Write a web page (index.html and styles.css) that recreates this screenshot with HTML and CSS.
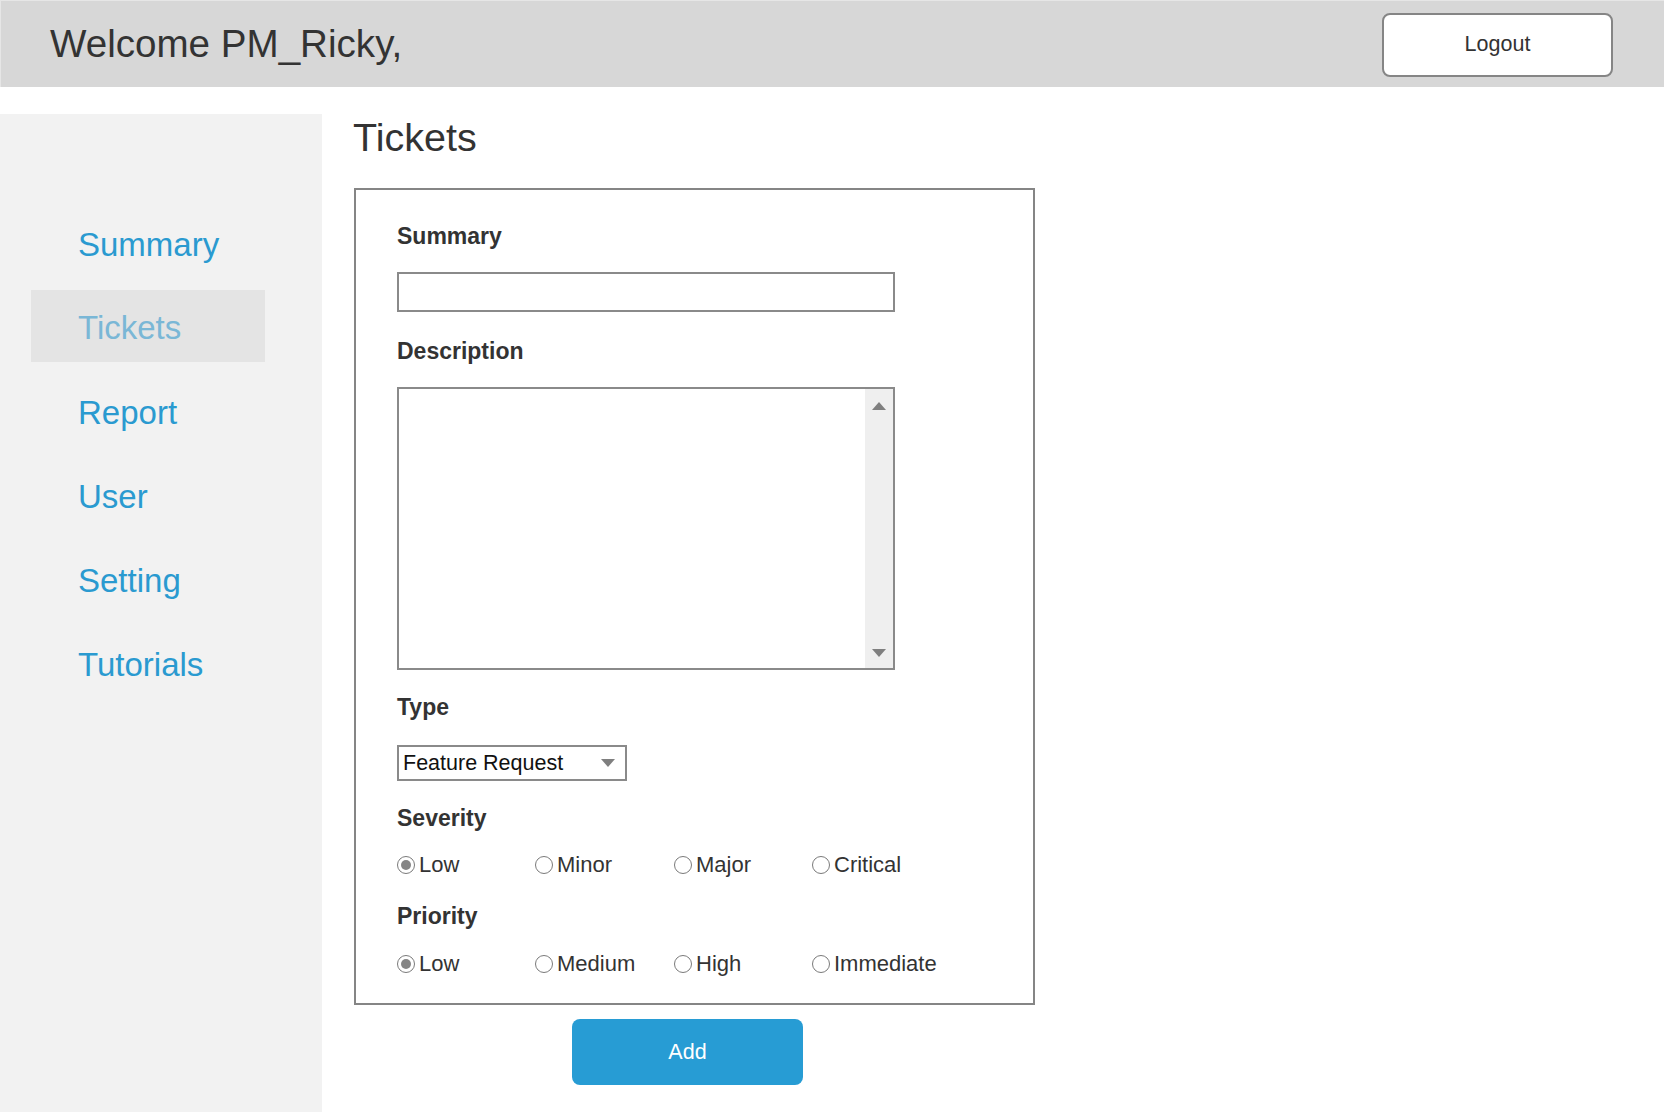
FILE: index.html
```html
<!DOCTYPE html>
<html lang="en">
<head>
<meta charset="utf-8">
<title>Tickets</title>
<link rel="stylesheet" href="styles.css">
</head>
<body>
<header class="topbar">
  <div class="welcome">Welcome PM_Ricky,</div>
  <button class="logout" type="button">Logout</button>
</header>
<div class="layout">
  <nav class="sidebar">
    <a class="nav-item" href="#">Summary</a>
    <a class="nav-item active" href="#">Tickets</a>
    <a class="nav-item" href="#">Report</a>
    <a class="nav-item" href="#">User</a>
    <a class="nav-item" href="#">Setting</a>
    <a class="nav-item" href="#">Tutorials</a>
  </nav>
  <main class="content">
    <h1 class="page-title">Tickets</h1>
    <form class="ticket-form">
      <div class="label">Summary</div>
      <div class="text-input"></div>

      <div class="label gap">Description</div>
      <div class="textarea">
        <div class="scrollbar">
          <svg class="arrow" width="14" height="8" viewBox="0 0 14 8"><polygon points="0,8 14,8 7,0" fill="#7f7f7f"/></svg>
          <svg class="arrow" width="14" height="8" viewBox="0 0 14 8"><polygon points="0,0 14,0 7,8" fill="#7f7f7f"/></svg>
        </div>
      </div>

      <div class="label gap type-label">Type</div>
      <div class="select">
        <span>Feature Request</span>
        <svg width="14" height="8" viewBox="0 0 14 8"><polygon points="0,0 14,0 7,8" fill="#7f7f7f"/></svg>
      </div>

      <div class="label gap severity-label">Severity</div>
      <div class="radio-row">
        <span class="radio checked"><span class="dot"></span>Low</span>
        <span class="radio"><span class="dot"></span>Minor</span>
        <span class="radio"><span class="dot"></span>Major</span>
        <span class="radio"><span class="dot"></span>Critical</span>
      </div>

      <div class="label gap">Priority</div>
      <div class="radio-row last-row">
        <span class="radio checked"><span class="dot"></span>Low</span>
        <span class="radio"><span class="dot"></span>Medium</span>
        <span class="radio"><span class="dot"></span>High</span>
        <span class="radio"><span class="dot"></span>Immediate</span>
      </div>
    </form>
    <button class="add-btn" type="button">Add</button>
  </main>
</div>
</body>
</html>
```
FILE: styles.css
```css
* { box-sizing: border-box; }
html, body { margin: 0; padding: 0; background: #ffffff; }
body {
  font-family: "Liberation Sans", Arial, Helvetica, sans-serif;
  color: #333333;
  width: 1664px;
  height: 1112px;
  overflow: hidden;
}

.topbar {
  height: 87px;
  background: #d7d7d7;
  border-top: 1px solid #e6e6e6;
  border-left: 1px solid #e6e6e6;
  display: flex;
  align-items: center;
  justify-content: space-between;
  padding: 0 51px 0 49px;
}
.welcome {
  font-size: 38.6px;
  color: #333333;
  line-height: 44px;
}
.logout {
  width: 231px;
  height: 64px;
  background: #ffffff;
  border: 2px solid #858585;
  border-radius: 8px;
  font-family: inherit;
  font-size: 21.5px;
  color: #333333;
  margin-top: 1px;
}

.layout {
  display: flex;
  margin-top: 27px;
  height: 998px;
}
.sidebar {
  width: 322px;
  background: #f2f2f2;
  display: flex;
  flex-direction: column;
  gap: 12px;
  padding: 94px 57px 0 31px;
}
.nav-item {
  display: flex;
  align-items: center;
  height: 72px;
  padding-left: 47px;
  padding-top: 2px;
  font-size: 33px;
  color: #2a9ad0;
  text-decoration: none;
}
.nav-item.active {
  background: #e4e4e4;
  color: #7ab7d6;
  margin-top: -2px;
  margin-bottom: 2px;
  padding-top: 4px;
}

.content {
  padding-left: 32px;
}
.page-title {
  margin: 0 0 0 -1px;
  font-size: 39.5px;
  font-weight: normal;
  line-height: 46px;
  color: #333333;
}
.ticket-form {
  margin-top: 28px;
  width: 681px;
  height: 817px;
  border: 2px solid #858585;
  padding: 33px 41px 0 41px;
}
.label {
  font-size: 23px;
  font-weight: bold;
  line-height: 26px;
  height: 26px;
  color: #333333;
  margin-bottom: 23px;
}
.label.gap { margin-top: 26px; }
.label.type-label { margin-top: 24px; margin-bottom: 25px; }

.text-input {
  width: 498px;
  height: 40px;
  border: 2px solid #8a8a8a;
  background: #ffffff;
}
.textarea {
  width: 498px;
  height: 283px;
  border: 2px solid #8a8a8a;
  background: #ffffff;
  display: flex;
  justify-content: flex-end;
}
.scrollbar {
  width: 28px;
  background: #efefef;
  display: flex;
  flex-direction: column;
  justify-content: space-between;
  align-items: center;
  padding: 13px 0 11px;
}
.arrow { display: block; }

.select {
  width: 230px;
  height: 36px;
  border: 2px solid #8a8a8a;
  display: flex;
  align-items: center;
  justify-content: space-between;
  padding: 0 10px 0 4px;
  font-size: 21.5px;
  color: #111111;
}
.select svg { display: block; }

.radio-row {
  display: grid;
  grid-template-columns: 138px 139px 138px auto;
  height: 26px;
  align-items: center;
  margin-top: -2px;
}
.radio-row.last-row { margin-top: -1px; }
.radio {
  display: flex;
  align-items: center;
  font-size: 22px;
  color: #333333;
  line-height: 26px;
}
.dot {
  width: 18px;
  height: 18px;
  border: 1.5px solid #7a7a7a;
  border-radius: 50%;
  margin-right: 4px;
  display: flex;
  align-items: center;
  justify-content: center;
  background: #ffffff;
}
.radio.checked .dot::after {
  content: "";
  width: 10px;
  height: 10px;
  border-radius: 50%;
  background: #858585;
}
.radio-row + .label.gap { margin-top: 25px; }
.label.gap.severity-label { margin-top: 24px; }

.add-btn {
  display: block;
  margin: 14px 0 0 218px;
  width: 231px;
  height: 66px;
  background: #279cd4;
  border: none;
  border-radius: 8px;
  color: #ffffff;
  font-family: inherit;
  font-size: 21.5px;
}
```
